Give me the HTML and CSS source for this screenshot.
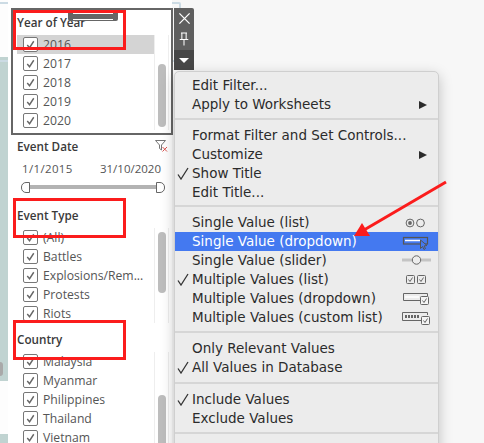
FILE: index.html
```html
<!DOCTYPE html>
<html lang="en-US">
  <head>
    <title>Filter menu</title>
    <link rel="stylesheet" href="styles.css">
  </head>
  <body>
    <div class="page">
      <div class="back-frame"></div>

      <div class="strip">
        <div class="strip-top">
          <div class="strip-handle"></div>
        </div>
        <div class="strip-bottom"></div>
      </div>

      <div class="filters">
        <section class="filter filter-year">
          <h3 class="filter-title">Year of Year</h3>
          <div class="filter-list">
            <ul class="rows">
              <li class="row row-selected"><span class="box"><svg viewBox="0 0 14 14"><path d="M3.5 7.5 6 10.5 10.5 3.5"/></svg></span>2016</li>
              <li class="row"><span class="box"><svg viewBox="0 0 14 14"><path d="M3.5 7.5 6 10.5 10.5 3.5"/></svg></span>2017</li>
              <li class="row"><span class="box"><svg viewBox="0 0 14 14"><path d="M3.5 7.5 6 10.5 10.5 3.5"/></svg></span>2018</li>
              <li class="row"><span class="box"><svg viewBox="0 0 14 14"><path d="M3.5 7.5 6 10.5 10.5 3.5"/></svg></span>2019</li>
              <li class="row"><span class="box"><svg viewBox="0 0 14 14"><path d="M3.5 7.5 6 10.5 10.5 3.5"/></svg></span>2020</li>
            </ul>
            <div class="track"><div class="thumb thumb-year"></div></div>
          </div>
        </section>

        <section class="filter filter-date">
          <div class="title-line">
            <h3 class="filter-title">Event Date</h3>
            <svg class="clear-icon" viewBox="0 0 13 12">
              <path class="funnel" d="M.5 .5H10.5L6.5 5V10L4.5 8.5V5Z"/>
              <path class="cross" d="M7.5 7 12 11.5M12 7 7.5 11.5"/>
            </svg>
          </div>
          <div class="dates"><span class="date-start">1/1/2015</span><span>31/10/2020</span></div>
          <div class="slider">
            <span class="handle handle-left"></span>
            <span class="slider-bar"></span>
            <span class="handle handle-right"></span>
          </div>
        </section>

        <section class="filter filter-type">
          <h3 class="filter-title">Event Type</h3>
          <div class="filter-list">
            <ul class="rows">
              <li class="row"><span class="box"><svg viewBox="0 0 14 14"><path d="M3.5 7.5 6 10.5 10.5 3.5"/></svg></span>(All)</li>
              <li class="row"><span class="box"><svg viewBox="0 0 14 14"><path d="M3.5 7.5 6 10.5 10.5 3.5"/></svg></span>Battles</li>
              <li class="row"><span class="box"><svg viewBox="0 0 14 14"><path d="M3.5 7.5 6 10.5 10.5 3.5"/></svg></span>Explosions/Rem...</li>
              <li class="row"><span class="box"><svg viewBox="0 0 14 14"><path d="M3.5 7.5 6 10.5 10.5 3.5"/></svg></span>Protests</li>
              <li class="row"><span class="box"><svg viewBox="0 0 14 14"><path d="M3.5 7.5 6 10.5 10.5 3.5"/></svg></span>Riots</li>
            </ul>
            <div class="track"><div class="thumb thumb-type"></div></div>
          </div>
        </section>

        <section class="filter filter-country">
          <h3 class="filter-title">Country</h3>
          <div class="filter-list">
            <ul class="rows">
              <li class="row"><span class="box"><svg viewBox="0 0 14 14"><path d="M3.5 7.5 6 10.5 10.5 3.5"/></svg></span>Malaysia</li>
              <li class="row"><span class="box"><svg viewBox="0 0 14 14"><path d="M3.5 7.5 6 10.5 10.5 3.5"/></svg></span>Myanmar</li>
              <li class="row"><span class="box"><svg viewBox="0 0 14 14"><path d="M3.5 7.5 6 10.5 10.5 3.5"/></svg></span>Philippines</li>
              <li class="row"><span class="box"><svg viewBox="0 0 14 14"><path d="M3.5 7.5 6 10.5 10.5 3.5"/></svg></span>Thailand</li>
              <li class="row"><span class="box"><svg viewBox="0 0 14 14"><path d="M3.5 7.5 6 10.5 10.5 3.5"/></svg></span>Vietnam</li>
            </ul>
            <div class="track"><div class="thumb thumb-country"></div></div>
          </div>
        </section>
      </div>

      <!-- selected filter card, drawn over the column -->
      <div class="focus-frame"></div>
      <div class="grip"></div>
      <div class="card-tools">
        <div class="tool-top">
          <svg class="tool-close" viewBox="0 0 14 14"><path d="M1.5 1.5 12.5 12.5M12.5 1.5 1.5 12.5"/></svg>
          <svg class="tool-pin" viewBox="0 0 14 16"><path d="M3.5 1H10.5M4.5 1V8M9.5 1V8M2 8.5H12M7 9V15.5"/></svg>
        </div>
        <div class="tool-menu"><span class="tool-caret"></span></div>
      </div>

      <div class="menu">
        <div class="item"><span class="tick"></span><span class="label">Edit Filter...</span></div>
        <div class="item"><span class="tick"></span><span class="label">Apply to Worksheets</span><span class="more"></span></div>
        <div class="sep"></div>
        <div class="item"><span class="tick"></span><span class="label">Format Filter and Set Controls...</span></div>
        <div class="item"><span class="tick"></span><span class="label">Customize</span><span class="more"></span></div>
        <div class="item"><span class="tick"><svg viewBox="0 0 12 13"><path d="M1 7.5 4 12 11 1"/></svg></span><span class="label">Show Title</span></div>
        <div class="item"><span class="tick"></span><span class="label">Edit Title...</span></div>
        <div class="sep sep-tight"></div>
        <div class="item">
          <span class="tick"></span><span class="label">Single Value (list)</span>
          <svg class="mode" viewBox="0 0 30 16"><circle cx="9" cy="8" r="3.9"/><circle class="fill" cx="9" cy="8" r="1.9"/><circle cx="19.500" cy="8" r="3.9"/></svg>
        </div>
        <div class="item item-active">
          <span class="tick"></span><span class="label">Single Value (dropdown)</span>
          <svg class="mode" viewBox="0 0 30 16"><rect class="dark" x="2.500" y="3.500" width="24" height="6.500"/><path class="white" d="M4 6.500H19"/><path class="cursor" d="M19.500 6V14.500L21.500 12.500 23 15.500 24.500 14.500 23 12 26 11.500Z"/></svg>
        </div>
        <div class="item">
          <span class="tick"></span><span class="label">Single Value (slider)</span>
          <svg class="mode" viewBox="0 0 30 16"><path class="bar" d="M1 7H11M20 7H30"/><circle class="knob" cx="15.500" cy="7" r="4.200"/></svg>
        </div>
        <div class="item">
          <span class="tick"><svg viewBox="0 0 12 13"><path d="M1 7.500 4 12 11 1"/></svg></span><span class="label">Multiple Values (list)</span>
          <svg class="mode" viewBox="0 0 30 16"><rect x="5.500" y="3.500" width="8" height="8" rx="1"/><path d="M7.500 7.500 9 9.500 11.500 5.500"/><rect x="16.500" y="3.500" width="8" height="8" rx="1"/><path d="M18.500 7.500 20 9.500 22.500 5.500"/></svg>
        </div>
        <div class="item">
          <span class="tick"></span><span class="label">Multiple Values (dropdown)</span>
          <svg class="mode" viewBox="0 0 30 16"><path d="M2.500 9.500V2.500H26.500V5M19.500 9.500H2.500"/><path class="white" d="M4 6H18"/><rect class="solid" x="19.500" y="5.500" width="8" height="8" rx="1"/><path d="M21.500 9.500 23 11.500 25.500 7.500"/></svg>
        </div>
        <div class="item">
          <span class="tick"></span><span class="label">Multiple Values (custom list)</span>
          <svg class="mode" viewBox="0 0 30 16"><path d="M1.500 10.500V2.500H26.500V5M20.500 10.500H1.500"/><path class="dots" d="M4 6.500H19"/><rect class="solid" x="20.500" y="6.500" width="8" height="8" rx="1"/><path d="M22.500 10.500 24 12.500 26.500 8.500"/></svg>
        </div>
        <div class="sep"></div>
        <div class="item"><span class="tick"></span><span class="label">Only Relevant Values</span></div>
        <div class="item"><span class="tick"><svg viewBox="0 0 12 13"><path d="M1 7.500 4 12 11 1"/></svg></span><span class="label">All Values in Database</span></div>
        <div class="sep sep-loose"></div>
        <div class="item"><span class="tick"><svg viewBox="0 0 12 13"><path d="M1 7.500 4 12 11 1"/></svg></span><span class="label">Include Values</span></div>
        <div class="item"><span class="tick"></span><span class="label">Exclude Values</span></div>
        <div class="sep"></div>
        <div class="item"><span class="tick"></span><span class="label">Hide Card</span></div>
      </div>

      <!-- red annotations on top of the screenshot -->
      <div class="mark mark-year"></div>
      <div class="mark mark-type"></div>
      <div class="mark mark-country"></div>
      <svg class="arrow" viewBox="0 0 484 443">
        <path class="arrow-line" d="M446 182 364 230"/>
        <path class="arrow-head" d="M354 236 362 223 370 236Z"/>
      </svg>
    </div>
  </body>
</html>
```

FILE: styles.css
```css
* {
  box-sizing: border-box;
}

body {
  margin: 0;
  background-color: #f7f7f7;
}

.page {
  position: relative;
  display: flex;
  width: 484px;
  height: 443px;
  overflow: hidden;
}

.back-frame {
  position: absolute;
  left: -4px;
  top: 2px;
  width: 185px;
  height: 60px;
  border: solid 2px #ccdbe4;
  border-radius: 2px;
}

/* sliver of the dashboard behind the filters */
.strip {
  display: flex;
  flex-direction: column;
  justify-content: space-between;
  width: 8px;
  padding-top: 57px;
  background-color: #fdfdfd;
}

.strip-top {
  display: flex;
  align-items: flex-end;
  height: 324px;
  padding-bottom: 5px;
  background-color: #c0d3d1;
}

.strip-handle {
  width: 3px;
  height: 14px;
  border-radius: 0 3px 3px 0;
  background-color: #a9a9a9;
}

.strip-bottom {
  height: 9px;
  background-color: #c0d3d1;
}

.filters {
  position: relative;
  width: 164px;
  height: 443px;
  padding-left: 9px;
  background-color: white;
}

.filter-year {
  padding-top: 12px;
}

.filter-date {
  margin-top: 6px;
}

.filter-type {
  margin-top: 12px;
}

.filter-country {
  margin-top: 6px;
}

.filter-title {
  margin: 0;
  font: 600 11.7px/20px "Open Sans", sans-serif;
  color: #3a3a3a;
}

.title-line {
  display: flex;
  justify-content: space-between;
  align-items: center;
  width: 151px;
}

.clear-icon {
  width: 13px;
  height: 12px;
  fill: none;
  stroke-width: 1;
}

.funnel {
  stroke: #777;
}

.cross {
  stroke: #d9534f;
}

.filter-list {
  display: flex;
  margin-top: 3px;
}

.rows {
  width: 137px;
  margin: 0;
  padding: 0;
  list-style: none;
}

.row {
  display: flex;
  align-items: center;
  gap: 5px;
  height: 19px;
  padding-left: 6px;
  font: 12.2px "Open Sans", sans-serif;
  color: #555;
}

.row-selected {
  background-color: #d4d4d4;
}

.box {
  display: flex;
  width: 15px;
  height: 15px;
  border: solid 1px #777;
  border-radius: 2px;
  background-color: white;
}

.box svg {
  width: 13px;
  height: 13px;
  fill: none;
  stroke: #666;
  stroke-width: 1.5;
}

.track {
  width: 15px;
  height: 95px;
  padding-left: 3px;
  border-left: solid 1px #eee;
  border-right: solid 1px #eee;
}

.thumb {
  width: 8px;
  border-radius: 4px;
  background-color: #bdbdbd;
}

.thumb-year {
  height: 63px;
  margin-top: 29px;
}

.thumb-type {
  height: 61px;
  margin-top: 4px;
}

.thumb-country {
  height: 60px;
  margin-top: 43px;
}

.dates {
  display: flex;
  justify-content: space-between;
  width: 139px;
  margin: 5px 0 0 5px;
  font: 11.5px/16px "Open Sans", sans-serif;
  color: #555;
}

.date-start {
  letter-spacing: .35px;
}

.slider {
  display: flex;
  align-items: center;
  width: 144px;
  height: 12px;
  margin: 4px 0 0 4px;
}

.slider-bar {
  flex: 1;
  height: 4px;
  background-color: #b3b3b3;
}

.handle {
  width: 9px;
  height: 11px;
  border: solid 1px #666;
  background-color: white;
}

.handle-left {
  border-radius: 5px 0 0 5px;
}

.handle-right {
  border-radius: 0 5px 5px 0;
}

.focus-frame {
  position: absolute;
  left: 11px;
  top: 8px;
  width: 162px;
  height: 127px;
  border: solid 2px #666;
}

.grip {
  position: absolute;
  left: 68px;
  top: 12px;
  width: 50px;
  height: 9px;
  padding: 1px 5px;
  border-radius: 0 0 2px 2px;
  background-color: #666;
}

.grip::before {
  content: "";
  display: block;
  height: 5px;
  border-top: solid 1px white;
  border-bottom: solid 1px white;
}

.card-tools {
  position: absolute;
  left: 174px;
  top: 8px;
  display: flex;
  flex-direction: column;
  width: 20px;
  height: 62px;
  border-radius: 0 2px 0 0;
  background-color: #5f5f5f;
}

.tool-top {
  display: flex;
  flex-direction: column;
  align-items: center;
  gap: 7px;
  height: 42px;
  padding-top: 4px;
}

.tool-close {
  width: 13px;
  height: 13px;
  fill: none;
  stroke: white;
  stroke-width: 1.4;
}

.tool-pin {
  width: 12px;
  height: 14px;
  fill: none;
  stroke: white;
  stroke-width: 1.2;
}

.tool-menu {
  display: flex;
  justify-content: center;
  align-items: center;
  flex: 1;
  background-color: #474747;
}

.tool-caret {
  border-top: solid 5px white;
  border-left: solid 5px transparent;
  border-right: solid 5px transparent;
}

.menu {
  position: absolute;
  left: 174px;
  top: 71px;
  width: 265px;
  height: 400px;
  padding-top: 4px;
  border: solid 1px #cfcfcf;
  border-radius: 5px 5px 0 0;
  background-color: #ececec;
  box-shadow: 0 4px 14px rgba(0, 0, 0, .22);
  font: 13.5px "DejaVu Sans", sans-serif;
  color: #2b2b2b;
}

.item {
  display: flex;
  align-items: center;
  height: 19px;
  padding-right: 7px;
}

.item-active {
  background-color: #4479f0;
  color: white;
}

.tick {
  display: flex;
  justify-content: center;
  width: 17px;
  padding-right: 2px;
}

.tick svg {
  width: 12px;
  height: 13px;
  fill: none;
  stroke: #333;
  stroke-width: 1.3;
}

.label {
  flex: 1;
  margin-bottom: 2px;
}

.more {
  margin-right: 4px;
  border-left: solid 8px #2b2b2b;
  border-top: solid 4.5px transparent;
  border-bottom: solid 4.5px transparent;
}

.mode {
  width: 30px;
  height: 16px;
  fill: none;
  stroke: #666;
  stroke-width: 1;
}

.mode .fill {
  fill: #666;
  stroke: none;
}

.mode .dark {
  stroke: #555;
  stroke-width: 1.2;
}

.mode .cursor {
  fill: #4479f0;
  stroke: #555;
}

.mode .white {
  stroke: white;
  stroke-width: 1.5;
}

.mode .bar {
  stroke: #c4c4c4;
  stroke-width: 3;
}

.mode .knob {
  fill: #ececec;
}

.mode .solid {
  fill: #f4f4f4;
}

.mode .dots {
  stroke-width: 3;
  stroke-dasharray: 2 1;
}

.sep {
  height: 2px;
  margin: 4px 0 6px;
  background-color: #d6d6d6;
}

.sep-tight {
  margin-top: 3px;
}

.sep-loose {
  margin-top: 5px;
}

.mark {
  position: absolute;
  left: 13px;
  width: 113px;
  border: solid 3px #fb1c1c;
}

.mark-year {
  top: 10px;
  height: 40px;
}

.mark-type {
  top: 198px;
  height: 40px;
}

.mark-country {
  top: 320px;
  height: 40px;
}

.arrow {
  position: absolute;
  left: 0;
  top: 0;
  width: 484px;
  height: 443px;
}

.arrow-line {
  stroke: #fb1c1c;
  stroke-width: 3;
}

.arrow-head {
  fill: #fb1c1c;
}
```
